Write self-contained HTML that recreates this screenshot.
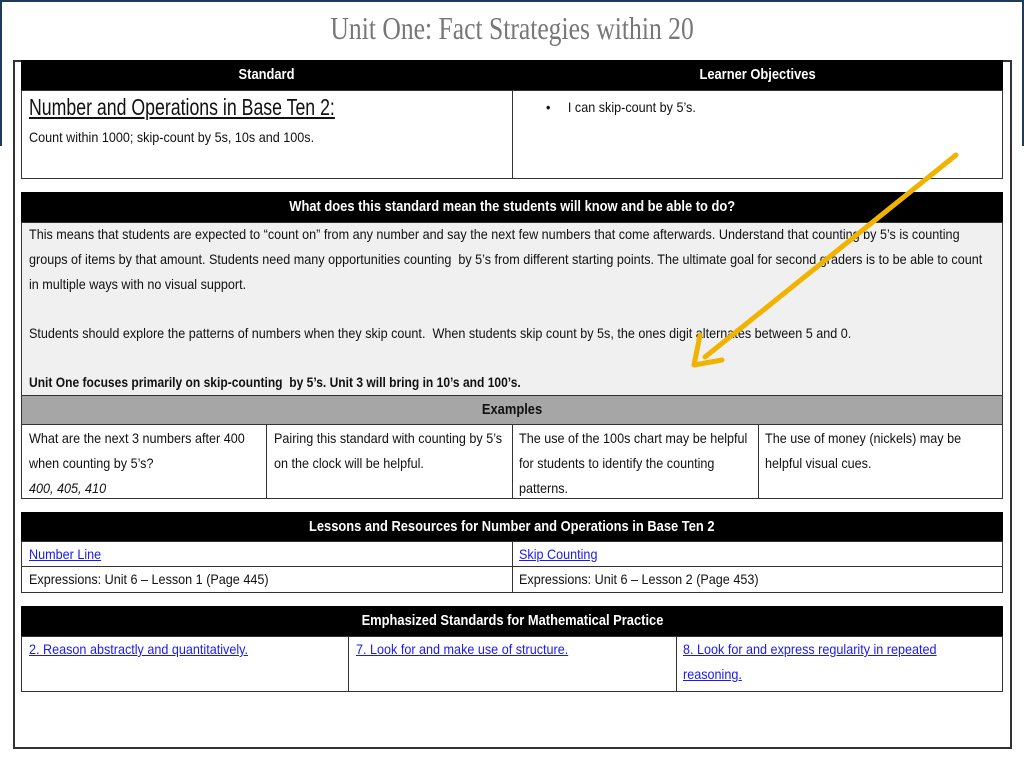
<!DOCTYPE html>
<html><head><meta charset="utf-8"><style>
*{margin:0;padding:0;box-sizing:border-box}
body{width:1024px;height:768px;background:#fff;position:relative;overflow:hidden;font-family:"Liberation Sans",sans-serif;color:#111}
.a{position:absolute}
.t{position:absolute;white-space:nowrap;font-size:14px;transform:scaleX(0.9);transform-origin:0 0;line-height:25px}
.h{position:absolute;background:#000;color:#fff;font-weight:bold;font-size:15px;text-align:center;line-height:30px}
.h span{display:inline-block;transform:scaleX(0.86)}
.b{position:absolute;border:1px solid #333}
.v{position:absolute;width:1px;background:#333}
.ln{position:absolute;height:1px;background:#333}
a{color:#1a1aee;text-decoration:underline}
</style></head><body>
<div class="a" style="left:0;top:0;width:1024px;height:2px;background:#1f3b5a"></div>
<div class="a" style="left:0;top:0;width:2px;height:146px;background:#1f3b5a"></div>
<div class="a" style="left:1022px;top:0;width:2px;height:146px;background:#1f3b5a"></div>
<div class="a" style="left:0;top:10px;width:1024px;text-align:center;font-family:'Liberation Serif',serif;font-size:32px;color:#777;line-height:36px"><span style="display:inline-block;transform:scaleX(0.8)">Unit One: Fact Strategies within 20</span></div>
<div class="b" style="left:13px;top:60px;width:999px;height:689px;border-width:2px"></div>

<div class="h" style="left:21px;top:60px;width:491px"><span>Standard</span></div>
<div class="h" style="left:512px;top:60px;width:491px"><span>Learner Objectives</span></div>
<div class="b" style="left:21px;top:90px;width:982px;height:89px"></div>
<div class="v" style="left:512px;top:90px;height:89px"></div>
<div class="t" style="left:29px;top:92px;font-size:23px;line-height:30px;text-decoration:underline;transform:scaleX(0.77)">Number and Operations in Base Ten 2:</div>
<div class="t" style="left:29px;top:125px">Count within 1000; skip-count by 5s, 10s and 100s.</div>
<div class="t" style="left:546px;top:95px">•&nbsp;&nbsp;&nbsp;&nbsp;&nbsp;I can skip-count by 5’s.</div>

<div class="h" style="left:21px;top:192px;width:982px"><span>What does this standard mean the students will know and be able to do?</span></div>
<div class="b" style="left:21px;top:222px;width:982px;height:277px;background:#f0f0f0"></div>
<div class="t" style="left:29px;top:222px">This means that students are expected to “count on” from any number and say the next few numbers that come afterwards. Understand that counting by 5’s is counting</div>
<div class="t" style="left:29px;top:247px">groups of items by that amount. Students need many opportunities counting &nbsp;by 5’s from different starting points. The ultimate goal for second graders is to be able to count</div>
<div class="t" style="left:29px;top:272px">in multiple ways with no visual support.</div>
<div class="t" style="left:29px;top:321px">Students should explore the patterns of numbers when they skip count. &nbsp;When students skip count by 5s, the ones digit alternates between 5 and 0.</div>
<div class="t" style="left:29px;top:370px;font-weight:bold;transform:scaleX(0.86)">Unit One focuses primarily on skip-counting &nbsp;by 5’s. Unit 3 will bring in 10’s and 100’s.</div>
<div class="a" style="left:21px;top:395px;width:982px;height:30px;background:#a6a6a6;border:1px solid #333;text-align:center;font-weight:bold;font-size:15px;line-height:28px"><span style="display:inline-block;transform:scaleX(0.86)">Examples</span></div>
<div class="a" style="left:22px;top:425px;width:980px;height:73px;background:#fff"></div>
<div class="v" style="left:266px;top:425px;height:74px"></div>
<div class="v" style="left:512px;top:425px;height:74px"></div>
<div class="v" style="left:758px;top:425px;height:74px"></div>
<div class="t" style="left:29px;top:426px">What are the next 3 numbers after 400<br>when counting by 5’s?<br><i>400, 405, 410</i></div>
<div class="t" style="left:274px;top:426px">Pairing this standard with counting by 5’s<br>on the clock will be helpful.</div>
<div class="t" style="left:519px;top:426px">The use of the 100s chart may be helpful<br>for students to identify the counting<br>patterns.</div>
<div class="t" style="left:765px;top:426px">The use of money (nickels) may be<br>helpful visual cues.</div>

<div class="h" style="left:21px;top:512px;width:982px;height:30px"><span>Lessons and Resources for Number and Operations in Base Ten 2</span></div>
<div class="b" style="left:21px;top:541px;width:982px;height:52px"></div>
<div class="ln" style="left:21px;top:566px;width:982px"></div>
<div class="v" style="left:512px;top:541px;height:52px"></div>
<div class="t" style="left:29px;top:542px"><a>Number Line</a></div>
<div class="t" style="left:519px;top:542px"><a>Skip Counting</a></div>
<div class="t" style="left:29px;top:567px">Expressions: Unit 6 – Lesson 1 (Page 445)</div>
<div class="t" style="left:519px;top:567px">Expressions: Unit 6 – Lesson 2 (Page 453)</div>

<div class="h" style="left:21px;top:606px;width:982px;height:30px"><span>Emphasized Standards for Mathematical Practice</span></div>
<div class="b" style="left:21px;top:636px;width:982px;height:56px"></div>
<div class="v" style="left:348px;top:636px;height:56px"></div>
<div class="v" style="left:676px;top:636px;height:56px"></div>
<div class="t" style="left:29px;top:637px"><a>2. Reason abstractly and quantitatively.</a></div>
<div class="t" style="left:356px;top:637px"><a>7. Look for and make use of structure.</a></div>
<div class="t" style="left:683px;top:637px"><a>8. Look for and express regularity in repeated</a><br><a>reasoning.</a></div>

<svg class="a" style="left:0;top:0" width="1024" height="768">
<line x1="956" y1="155" x2="705" y2="357" stroke="#f0b400" stroke-width="5" stroke-linecap="round"/>
<polyline points="700,335 694,365 722,360" fill="none" stroke="#f0b400" stroke-width="5" stroke-linecap="round" stroke-linejoin="round"/>
</svg>
</body></html>
